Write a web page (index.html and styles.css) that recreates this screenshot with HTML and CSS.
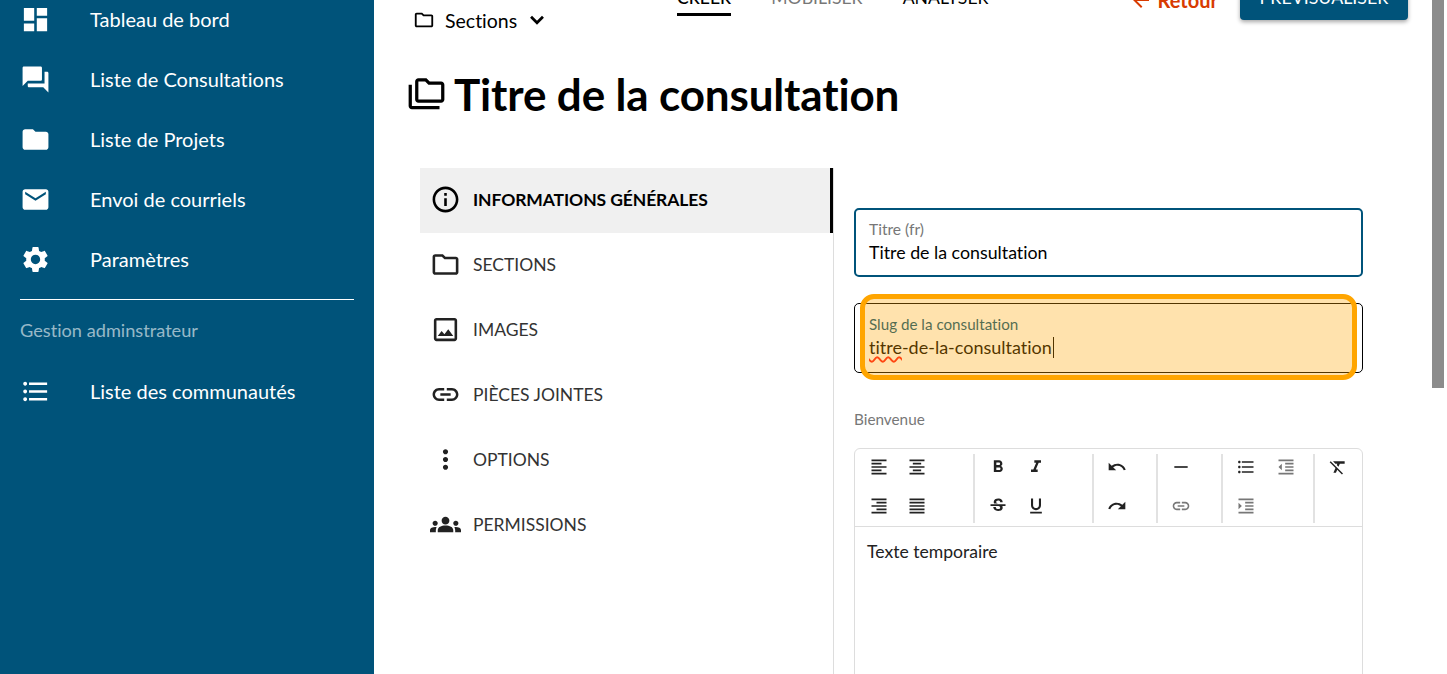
FILE: index.html
```html
<!DOCTYPE html>
<html lang="fr">
<head>
    <meta charset="UTF-8">
    <meta name="viewport" content="width=device-width, initial-scale=1.0">
    <title>Titre de la consultation</title>
    <link rel="stylesheet" href="styles.css">
</head>
<body>
    <!-- Sidebar -->
    <aside class="sidebar">
        <nav class="side-nav">
            <a class="side-link"><svg class="side-icon" viewBox="0 0 24 24"><path d="M3 13h8V3H3v10zm0 8h8v-6H3v6zm10 0h8V11h-8v10zm0-18v6h8V3h-8z"/></svg>Tableau de bord</a>
            <a class="side-link"><svg class="side-icon" viewBox="0 0 24 24"><path d="M21 6h-2v9H6v2c0 .55.45 1 1 1h11l4 4V7c0-.55-.45-1-1-1zm-4 6V3c0-.55-.45-1-1-1H3c-.55 0-1 .45-1 1v14l4-4h10c.55 0 1-.45 1-1z"/></svg>Liste de Consultations</a>
            <a class="side-link"><svg class="side-icon" viewBox="0 0 24 24"><path d="M10 4H4c-1.1 0-1.99.9-1.99 2L2 18c0 1.1.9 2 2 2h16c1.1 0 2-.9 2-2V8c0-1.1-.9-2-2-2h-8l-2-2z"/></svg>Liste de Projets</a>
            <a class="side-link"><svg class="side-icon" viewBox="0 0 24 24"><path d="M20 4H4c-1.1 0-1.99.9-1.99 2L2 18c0 1.1.9 2 2 2h16c1.1 0 2-.9 2-2V6c0-1.1-.9-2-2-2zm0 4l-8 5-8-5V6l8 5 8-5v2z"/></svg>Envoi de courriels</a>
            <a class="side-link"><svg class="side-icon" viewBox="0 0 24 24"><path d="M19.14 12.94c.04-.3.06-.61.06-.94 0-.32-.02-.64-.07-.94l2.03-1.58c.18-.14.23-.41.12-.61l-1.92-3.32c-.12-.22-.37-.29-.59-.22l-2.39.96c-.5-.38-1.03-.7-1.62-.94l-.36-2.54c-.04-.24-.24-.41-.48-.41h-3.84c-.24 0-.43.17-.47.41l-.36 2.54c-.59.24-1.13.57-1.62.94l-2.39-.96c-.22-.08-.47 0-.59.22L2.74 8.87c-.12.21-.08.47.12.61l2.03 1.58c-.05.3-.09.63-.09.94s.02.64.07.94l-2.03 1.58c-.18.14-.23.41-.12.61l1.92 3.32c.12.22.37.29.59.22l2.39-.96c.5.38 1.03.7 1.62.94l.36 2.54c.05.24.24.41.48.41h3.84c.24 0 .44-.17.47-.41l.36-2.54c.59-.24 1.13-.56 1.62-.94l2.39.96c.22.08.47 0 .59-.22l1.92-3.32c.12-.22.07-.47-.12-.61l-2.01-1.58zM12 15.6c-1.98 0-3.6-1.62-3.6-3.6s1.62-3.6 3.6-3.6 3.6 1.62 3.6 3.6-1.62 3.6-3.6 3.6z"/></svg>Paramètres</a>
        </nav>
        <hr class="side-divider">
        <p class="side-title">Gestion adminstrateur</p>
        <a class="side-link"><svg class="side-icon" viewBox="0 0 24 24"><path d="M4 10.5c-.83 0-1.5.67-1.5 1.5s.67 1.5 1.5 1.5 1.5-.67 1.5-1.5-.67-1.5-1.5-1.5zm0-6c-.83 0-1.5.67-1.5 1.5S3.17 7.5 4 7.5 5.5 6.83 5.5 6 4.83 4.5 4 4.5zm0 12c-.83 0-1.5.68-1.5 1.5s.68 1.5 1.5 1.5 1.5-.68 1.5-1.5-.67-1.5-1.5-1.5zM7 19h14v-2H7v2zm0-6h14v-2H7v2zm0-8v2h14V5H7z"/></svg>Liste des communautés</a>
    </aside>

    <main class="main">
        <!-- Top bar, partly scrolled out of view -->
        <header class="topbar">
            <div class="sections-menu">
                <svg class="sections-icon" viewBox="0 0 24 24"><path d="M9.17 6l2 2H20v10H4V6h5.17M10 4H4c-1.1 0-1.99.9-1.99 2L2 18c0 1.1.9 2 2 2h16c1.1 0 2-.9 2-2V8c0-1.1-.9-2-2-2h-8l-2-2z"/></svg>
                <span>Sections</span>
                <svg class="chevron" viewBox="0 0 24 24"><path d="M5.5 8.5L12 15l6.5-6.5"/></svg>
            </div>
            <div class="tabs">
                <a class="tab tab-active">CRÉER</a>
                <a class="tab tab-muted">MOBILISER</a>
                <a class="tab">ANALYSER</a>
            </div>
            <a class="back-link"><svg class="back-icon" viewBox="0 0 24 24"><path d="M20 11H7.83l5.59-5.59L12 4l-8 8 8 8 1.41-1.41L7.83 13H20v-2z"/></svg>Retour</a>
            <button class="preview-btn">PRÉVISUALISER</button>
        </header>

        <h1 class="page-title">
            <svg class="title-icon" viewBox="0 0 24 24"><path d="M3 19h17v2H3c-1.1 0-2-.9-2-2V6h2v13zM23 6v9c0 1.1-.9 2-2 2H7c-1.1 0-2-.9-2-2l.01-11c0-1.1.89-2 1.99-2h5l2 2h7c1.1 0 2 .9 2 2zM7 15h14V6h-7.83l-2-2H7v11z"/></svg>
            Titre de la consultation
        </h1>

        <div class="content">
            <ul class="menu">
                <li class="menu-item menu-active"><svg class="menu-icon" viewBox="0 0 24 24"><path d="M11 7h2v2h-2zm0 4h2v6h-2zm1-9C6.48 2 2 6.48 2 12s4.48 10 10 10 10-4.48 10-10S17.52 2 12 2zm0 18c-4.41 0-8-3.59-8-8s3.59-8 8-8 8 3.59 8 8-3.59 8-8 8z"/></svg>INFORMATIONS GÉNÉRALES</li>
                <li class="menu-item"><svg class="menu-icon" viewBox="0 0 24 24"><path d="M9.17 6l2 2H20v10H4V6h5.17M10 4H4c-1.1 0-1.99.9-1.99 2L2 18c0 1.1.9 2 2 2h16c1.1 0 2-.9 2-2V8c0-1.1-.9-2-2-2h-8l-2-2z"/></svg>SECTIONS</li>
                <li class="menu-item"><svg class="menu-icon" viewBox="0 0 24 24"><path d="M19 5v14H5V5h14m0-2H5c-1.1 0-2 .9-2 2v14c0 1.1.9 2 2 2h14c1.1 0 2-.9 2-2V5c0-1.1-.9-2-2-2zm-4.86 8.86l-3 3.87L9 13.14 6 17h12l-3.86-5.14z"/></svg>IMAGES</li>
                <li class="menu-item"><svg class="menu-icon" viewBox="0 0 24 24"><path d="M3.9 12c0-1.71 1.39-3.1 3.1-3.1h4V7H7c-2.76 0-5 2.24-5 5s2.24 5 5 5h4v-1.9H7c-1.71 0-3.1-1.39-3.1-3.1zM8 13h8v-2H8v2zm9-6h-4v1.9h4c1.71 0 3.1 1.39 3.1 3.1s-1.39 3.1-3.1 3.1h-4V17h4c2.76 0 5-2.24 5-5s-2.24-5-5-5z"/></svg>PIÈCES JOINTES</li>
                <li class="menu-item"><svg class="menu-icon" viewBox="0 0 24 24"><path d="M12 8c1.1 0 2-.9 2-2s-.9-2-2-2-2 .9-2 2 .9 2 2 2zm0 2c-1.1 0-2 .9-2 2s.9 2 2 2 2-.9 2-2-.9-2-2-2zm0 6c-1.1 0-2 .9-2 2s.9 2 2 2 2-.9 2-2-.9-2-2-2z"/></svg>OPTIONS</li>
                <li class="menu-item"><svg class="menu-icon" viewBox="0 0 24 24"><path d="M12 12.75c1.63 0 3.07.39 4.24.9 1.08.48 1.76 1.56 1.76 2.73V18H6v-1.61c0-1.18.68-2.26 1.76-2.73 1.17-.52 2.61-.91 4.24-.91zM4 13c1.1 0 2-.9 2-2s-.9-2-2-2-2 .9-2 2 .9 2 2 2zm1.13 1.1c-.37-.06-.74-.1-1.13-.1-.99 0-1.93.21-2.78.58C.48 14.9 0 15.62 0 16.43V18h4.5v-1.61c0-.83.23-1.61.63-2.29zM20 13c1.1 0 2-.9 2-2s-.9-2-2-2-2 .9-2 2 .9 2 2 2zm4 3.43c0-.81-.48-1.53-1.22-1.85-.85-.37-1.79-.58-2.78-.58-.39 0-.76.04-1.13.1.4.68.63 1.46.63 2.29V18H24v-1.57zM12 6c1.66 0 3 1.34 3 3s-1.34 3-3 3-3-1.34-3-3 1.34-3 3-3z"/></svg>PERMISSIONS</li>
            </ul>

            <form class="form">
                <div class="field field-focus">
                    <span class="field-label">Titre (fr)</span>
                    <span class="field-value">Titre de la consultation</span>
                </div>
                <div class="field field-slug">
                    <span class="field-label">Slug de la consultation</span>
                    <span class="field-value"><span class="misspelled">titre</span>-de-la-consultation<span class="caret"></span></span>
                    <div class="highlight"></div>
                </div>

                <p class="editor-label">Bienvenue</p>
                <div class="editor">
                    <div class="toolbar">
                        <div class="tool-group group-a">
                            <svg class="tool" viewBox="0 0 24 24"><path d="M15 15H3v2h12v-2zm0-8H3v2h12V7zM3 13h18v-2H3v2zm0 8h18v-2H3v2zM3 3v2h18V3H3z"/></svg>
                            <svg class="tool" viewBox="0 0 24 24"><path d="M7 15v2h10v-2H7zm-4 6h18v-2H3v2zm0-8h18v-2H3v2zm4-6v2h10V7H7zM3 3v2h18V3H3z"/></svg>
                            <svg class="tool" viewBox="0 0 24 24"><path d="M3 21h18v-2H3v2zm6-4h12v-2H9v2zm-6-4h18v-2H3v2zm6-4h12V7H9v2zM3 3v2h18V3H3z"/></svg>
                            <svg class="tool" viewBox="0 0 24 24"><path d="M3 21h18v-2H3v2zm0-4h18v-2H3v2zm0-4h18v-2H3v2zm0-4h18V7H3v2zm0-6v2h18V3H3z"/></svg>
                        </div>
                        <div class="tool-group group-b">
                            <svg class="tool" viewBox="0 0 24 24"><path d="M15.6 10.79c.97-.67 1.65-1.77 1.65-2.79 0-2.26-1.75-4-4-4H7v14h7.04c2.09 0 3.71-1.7 3.71-3.79 0-1.52-.86-2.82-2.15-3.42zM10 6.5h3c.83 0 1.5.67 1.5 1.5s-.67 1.5-1.5 1.5h-3v-3zm3.5 9H10v-3h3.5c.83 0 1.5.67 1.5 1.5s-.67 1.5-1.5 1.5z"/></svg>
                            <svg class="tool" viewBox="0 0 24 24"><path d="M10 4v3h2.21l-3.42 8H6v3h8v-3h-2.21l3.42-8H18V4z"/></svg>
                            <svg class="tool" viewBox="0 0 24 24"><path d="M6.85 7.08C6.85 4.37 9.45 3 12.24 3c1.64 0 3 .49 3.9 1.28.77.65 1.46 1.73 1.46 3.24h-3.01c0-.31-.05-.59-.15-.85-.29-.86-1.2-1.28-2.25-1.28-1.86 0-2.34 1.02-2.34 1.7 0 .48.25.88.74 1.21.38.25.77.48 1.41.7H7.39c-.21-.34-.54-.89-.54-1.92zM21 12v-2H3v2h9.62c1.15.45 1.96.75 1.96 1.97 0 1-.81 1.67-2.28 1.67-1.54 0-2.93-.54-2.93-2.51H6.4c0 .55.08 1.13.24 1.58.81 2.29 3.29 3.3 5.67 3.3 2.27 0 5.3-.89 5.3-4.05 0-.3-.01-1.16-.48-1.94H21V12z"/></svg>
                            <svg class="tool" viewBox="0 0 24 24"><path d="M12 17c3.31 0 6-2.69 6-6V3h-2.5v8c0 1.93-1.57 3.5-3.5 3.5S8.5 12.93 8.5 11V3H6v8c0 3.31 2.69 6 6 6zm-7 2v2h14v-2H5z"/></svg>
                        </div>
                        <div class="tool-group group-c">
                            <svg class="tool" viewBox="0 0 24 24"><path d="M12.5 8c-2.65 0-5.05.99-6.9 2.6L2 7v9h9l-3.62-3.62c1.39-1.16 3.16-1.88 5.12-1.88 3.54 0 6.55 2.31 7.6 5.5l2.37-.78C21.08 11.03 17.15 8 12.5 8z"/></svg>
                            <svg class="tool" viewBox="0 0 24 24"><path d="M18.4 10.6C16.55 8.99 14.15 8 11.5 8c-4.65 0-8.58 3.03-9.96 7.22L3.9 16c1.05-3.19 4.05-5.5 7.6-5.5 1.95 0 3.73.72 5.12 1.88L13 16h9V7l-3.6 3.6z"/></svg>
                        </div>
                        <div class="tool-group group-c group-wide">
                            <svg class="tool" viewBox="0 0 24 24"><path d="M4 11h16v2H4z"/></svg>
                            <svg class="tool tool-muted" viewBox="0 0 24 24"><path d="M3.9 12c0-1.71 1.39-3.1 3.1-3.1h4V7H7c-2.76 0-5 2.24-5 5s2.24 5 5 5h4v-1.9H7c-1.71 0-3.1-1.39-3.1-3.1zM8 13h8v-2H8v2zm9-6h-4v1.9h4c1.71 0 3.1 1.39 3.1 3.1s-1.39 3.1-3.1 3.1h-4V17h4c2.76 0 5-2.24 5-5s-2.24-5-5-5z"/></svg>
                        </div>
                        <div class="tool-group group-d">
                            <svg class="tool" viewBox="0 0 24 24"><path d="M4 10.5c-.83 0-1.5.67-1.5 1.5s.67 1.5 1.5 1.5 1.5-.67 1.5-1.5-.67-1.5-1.5-1.5zm0-6c-.83 0-1.5.67-1.5 1.5S3.17 7.5 4 7.5 5.5 6.83 5.5 6 4.83 4.5 4 4.5zm0 12c-.83 0-1.5.68-1.5 1.5s.68 1.5 1.5 1.5 1.5-.68 1.5-1.5-.67-1.5-1.5-1.5zM7 19h14v-2H7v2zm0-6h14v-2H7v2zm0-8v2h14V5H7z"/></svg>
                            <svg class="tool tool-muted" viewBox="0 0 24 24"><path d="M11 17h10v-2H11v2zm-8-5l4 4V8l-4 4zm0 9h18v-2H3v2zM3 3v2h18V3H3zm8 6h10V7H11v2zm0 4h10v-2H11v2z"/></svg>
                            <svg class="tool tool-muted" viewBox="0 0 24 24"><path d="M3 21h18v-2H3v2zM3 8v8l4-4-4-4zm8 9h10v-2H11v2zM3 3v2h18V3H3zm8 6h10V7H11v2zm0 4h10v-2H11v2z"/></svg>
                        </div>
                        <div class="tool-group group-e">
                            <svg class="tool" viewBox="0 0 24 24"><path d="M3.27 5L2 6.27l6.97 6.97L6.5 19h3l1.57-3.66L16.73 21 18 19.73 3.55 5.27 3.27 5zM6 5v.18L8.82 8h2.4l-.72 1.68 2.1 2.1L14.21 8H20V5H6z"/></svg>
                        </div>
                    </div>
                    <div class="editor-body">Texte temporaire</div>
                </div>
            </form>
        </div>
    </main>

    <div class="scrollbar"><div class="scroll-thumb"></div></div>
</body>
</html>
```

FILE: styles.css
```css
* {
    margin: 0;
    padding: 0;
    box-sizing: border-box;
    font-family: "Lato", sans-serif;
    font-variant-ligatures: none;
}

body {
    display: flex;
    height: 674px;
    overflow: hidden;
    background: white;
    color: #000;
}

/* Sidebar */
.sidebar {
    flex: 0 0 374px;
    background: #00537a;
    color: white;
    padding: 0 20px;
}

.side-nav {
    margin-top: -11px;
}

.side-link {
    display: flex;
    align-items: center;
    height: 60px;
    font-size: 20px;
}

.side-icon {
    flex: 0 0 31px;
    width: 31px;
    height: 31px;
    margin-right: 39px;
    fill: white;
}

.side-divider {
    border: none;
    border-top: 1px solid white;
    margin-top: 10px;
}

.side-title {
    font-size: 18.2px;
    line-height: 22px;
    color: rgba(255, 255, 255, 0.6);
    margin: 19px 0 20px;
}

/* Top bar */
.main {
    flex: 1;
    min-width: 0;
}

.topbar {
    display: flex;
    align-items: flex-start;
    height: 22px;
    margin-top: -22px;
    padding-left: 39px;
}

.sections-menu {
    display: flex;
    align-items: center;
    margin-top: 29px;
    font-size: 19.5px;
    height: 26px;
    width: 264px;
}

.sections-icon {
    width: 22px;
    height: 22px;
    margin-right: 10px;
}

.chevron {
    width: 22px;
    height: 22px;
    margin-left: 9px;
    fill: none;
    stroke: black;
    stroke-width: 3;
}

.tabs {
    display: flex;
    gap: 40px;
    margin-top: 9px;
}

.tab {
    display: block;
    font-size: 17.6px;
    line-height: 22px;
    height: 29px;
}

.tab-active {
    font-weight: 500;
    border-bottom: 3px solid black;
}

.tab-muted {
    color: #777;
}

.back-link {
    display: flex;
    align-items: center;
    margin: 10px 0 0 140px;
    font-size: 20px;
    line-height: 22px;
    font-weight: 700;
    color: #d83b01;
}

.back-icon {
    width: 24px;
    height: 24px;
    margin-right: 5px;
    fill: #d83b01;
}

.preview-btn {
    width: 168px;
    height: 42px;
    margin-left: 22px;
    padding-bottom: 4px;
    background: #00537a;
    color: white;
    border: none;
    border-radius: 4px;
    font-size: 17.8px;
    box-shadow: 0 2px 4px rgba(0, 0, 0, 0.35);
}

/* Title */
.page-title {
    display: flex;
    align-items: center;
    margin: 70px 0 0 33px;
    height: 48px;
    font-size: 44px;
    font-weight: 700;
    line-height: 48px;
    letter-spacing: -0.15px;
}

.title-icon {
    width: 39px;
    height: 39px;
    margin-right: 8px;
}

/* Left menu */
.content {
    display: flex;
    margin: 50px 0 0 46px;
}

.menu {
    flex: 0 0 414px;
    list-style: none;
    height: 600px;
    border-right: 1px solid #ddd;
}

.menu-item {
    display: flex;
    align-items: center;
    height: 65px;
    padding: 0 0 2px 10px;
    font-size: 17.5px;
    color: #333;
}

.menu-icon {
    flex: 0 0 31px;
    width: 31px;
    height: 31px;
    margin-right: 12px;
    fill: #222;
}

.menu-active {
    background: #f0f0f0;
    border-right: 3px solid black;
    color: black;
    font-weight: 700;
    letter-spacing: -0.1px;
}

.menu-active .menu-icon {
    fill: black;
}

/* Form */
.form {
    flex: 0 0 509px;
    margin: 40px 0 0 20px;
}

.field {
    position: relative;
    height: 69px;
    padding: 11px 13px;
    border: 2px solid #00537a;
    border-radius: 5px;
    margin-bottom: 26px;
}

.field-label {
    display: block;
    font-size: 15.6px;
    line-height: 17px;
    color: #777;
}

.field-value {
    display: block;
    font-size: 17.8px;
    line-height: 26px;
    margin-top: 1px;
}

.field-slug {
    height: 70px;
    border: 1px solid black;
    padding: 12px 14px;
}

.field-slug .field-label {
    font-size: 15.2px;
    color: #00537a;
}

.field-slug .field-value {
    font-size: 18px;
    margin-top: 1px;
}

.misspelled {
    text-decoration: underline wavy #ff1a1a;
    text-decoration-thickness: 1.5px;
    text-underline-offset: 2px;
}

.caret {
    display: inline-block;
    width: 1px;
    height: 21px;
    margin-left: 1px;
    vertical-align: -4px;
    background: black;
}

.highlight {
    position: absolute;
    top: -10px;
    left: 5px;
    right: 5px;
    bottom: -8px;
    border: 5px solid #ffa500;
    border-radius: 14px;
    background: rgba(255, 165, 0, 0.32);
}

/* Editor */
.editor-label {
    font-size: 15.3px;
    line-height: 18px;
    color: #777;
    margin-top: 37px;
}

.editor {
    margin-top: 20px;
    height: 300px;
    border: 1px solid #ddd;
    border-radius: 6px;
}

.toolbar {
    display: flex;
    padding-top: 5px;
    height: 78px;
    border-bottom: 1px solid #ddd;
}

.tool-group {
    display: grid;
    grid-auto-rows: 39px;
    height: 69px;
    padding-left: 4px;
    border-right: 2px solid #e2e2e2;
}

.group-a,
.group-b {
    grid-template-columns: 38px 38px;
    width: 119px;
}

.group-a {
    width: 120px;
    padding-left: 5px;
}

.group-c {
    width: 64px;
}

.group-wide {
    width: 65px;
}

.group-d {
    grid-template-columns: 40px 38px;
    width: 92px;
}

.group-e {
    border-right: none;
}

.tool {
    width: 20px;
    height: 20px;
    margin: 3px 9px;
    fill: #222;
}

.tool-muted {
    fill: #777;
}

.editor-body {
    padding: 14px 12px;
    font-size: 17.6px;
    line-height: 22px;
    color: #222;
}

/* Scrollbar */
.scrollbar {
    flex: 0 0 15px;
}

.scroll-thumb {
    width: 12px;
    height: 388px;
    background: #8c8c8c;
}
```
